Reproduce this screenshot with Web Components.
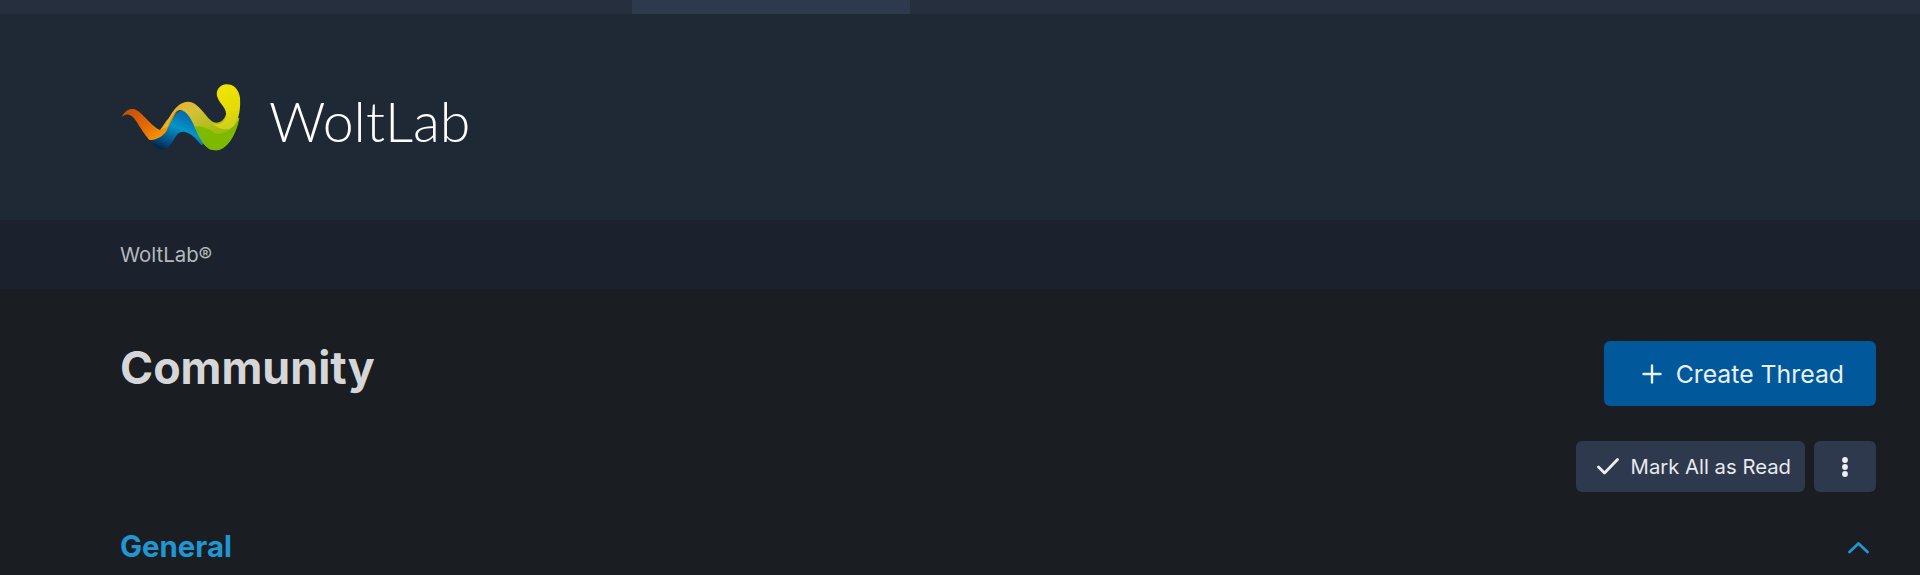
<!DOCTYPE html>
<html lang="en"><head><meta charset="utf-8"><title>WoltLab</title>
<style>
html,body{margin:0;padding:0;background:#1a1d21;}
body{font-family:Inter,"Liberation Sans",sans-serif;height:575px;overflow:hidden;}
</style></head><body>
<wl-topbar></wl-topbar>
<wl-header></wl-header>
<wl-subnav>WoltLab®</wl-subnav>
<wl-content></wl-content>
<script>
function def(name, html){
  customElements.define(name, class extends HTMLElement{
    constructor(){super();this.attachShadow({mode:'open'}).innerHTML=html;}
  });
}
def('wl-topbar',`<style>
:host{display:flex;height:14px;background:#262f3d;}
.a{width:632px}.b{width:278px;background:#2d3a4e}
</style><div class="a"></div><div class="b"></div>`);
def('wl-logo',`<style>
:host{display:flex;align-items:center;gap:19px}
svg{display:block;width:140px;height:85px;margin-left:-10px}
span{font:300 55.5px/60px Lato,sans-serif;color:#fff;padding-top:7px}
</style>
<svg viewBox="0 0 420 255" aria-hidden="true">
<defs>
<linearGradient id="o" x1="0" y1="0" x2="1" y2=".6"><stop offset="0" stop-color="#c24a08"/><stop offset=".55" stop-color="#e46a05"/><stop offset="1" stop-color="#fca500"/></linearGradient>
<linearGradient id="b" x1="0" y1="1" x2=".6" y2=".15"><stop offset="0" stop-color="#050c16"/><stop offset=".28" stop-color="#04457a"/><stop offset=".7" stop-color="#0495c9"/><stop offset="1" stop-color="#0470b0"/></linearGradient>
<linearGradient id="y" x1="0" y1="0" x2="1" y2="1"><stop offset="0" stop-color="#eda52a"/><stop offset=".3" stop-color="#d8bf3a"/><stop offset=".62" stop-color="#a8bd12"/><stop offset="1" stop-color="#72b800"/></linearGradient>
<linearGradient id="t" x1="0" y1="0" x2=".3" y2="1"><stop offset="0" stop-color="#f3e600"/><stop offset=".7" stop-color="#e6dc05"/><stop offset="1" stop-color="#cfd01a"/></linearGradient>
</defs>
<path fill="url(#b)" d="M116 193C130 208 140 224 156 224C176 224 186 202 196 186C206 171 216 168 228 172C244 176 258 192 274 210L300 200C275 165 250 115 226 106C205 100 190 125 172 155C160 175 135 195 116 193Z"/>
<path fill="url(#o)" d="M35 127C44 108 56 101 70 102C92 104 118 150 150 165L170 136L205 106C190 122 180 148 168 170C155 186 136 196 118 195C105 180 92 160 80 140C65 118 50 112 35 127Z"/>
<path fill="url(#y)" d="M150 165C175 150 185 85 232 80C262 78 282 118 305 138C320 150 345 140 350 110L388 130C380 175 352 226 318 226C290 226 280 205 268 185C250 150 238 108 210 105C195 108 185 125 172 155Z"/>
<path fill="#7cb900" d="M306 168C325 186 356 178 386 132C378 180 350 226 318 226C290 226 280 205 268 185C262 172 258 164 254 155C272 150 290 158 306 168Z" opacity=".92"/>
<path fill="url(#t)" d="M322 66C316 50 326 30 348 28C368 27 386 40 390 68C392 100 388 132 372 152C356 170 328 165 304 143C322 152 340 148 348 125C352 98 330 90 322 66Z"/>
</svg><span>WoltLab</span>`);
def('wl-header',`<style>
:host{display:flex;align-items:center;box-sizing:border-box;height:206px;padding:0 0 0 120px;background:#1f2936}
</style><wl-logo></wl-logo>`);
def('wl-subnav',`<style>
:host{display:flex;align-items:center;box-sizing:border-box;height:69px;padding:0 0 0 120px;background:#1b222e;color:#b5b8bc;font-size:20.4px}
</style><slot></slot>`);
def('wl-button',`<style>
:host{display:inline-flex;align-items:center;justify-content:center;box-sizing:border-box;border-radius:6px;background:var(--bg,#2e394d);color:var(--fg,#e8eaee);font-size:var(--fs,20.3px);height:var(--h,51px);padding:var(--pad,0 14px 0 21px);gap:var(--gap,12px);white-space:nowrap}
::slotted(svg){display:block;flex:none}
</style><slot name="icon"></slot><slot></slot>`);
def('wl-content',`<style>
:host{display:block;box-sizing:border-box;padding:52px 44px 0 120px}
.top{display:flex;justify-content:space-between;align-items:flex-start}
h1{margin:0;font-size:44.8px;line-height:54px;font-weight:700;color:#d4d6d8}
.primary{--bg:#01589a;--fg:#eaf0f8;--fs:24.8px;--h:65px;--pad:0 32px 0 38px;--gap:14px}
.actions{display:flex;justify-content:flex-end;gap:9px;margin-top:35px}
.sec{display:flex;justify-content:space-between;align-items:center;margin-top:37px}
h2{margin:0;font-size:29.4px;line-height:36px;font-weight:700;color:#2096d3}
.sq{--pad:0;width:62px}
</style>
<div class="top"><h1>Community</h1>
<wl-button class="primary"><svg slot="icon" width="20" height="20" viewBox="0 0 20 20" fill="none" stroke="#eaf0f8" stroke-width="2.4" stroke-linecap="round"><path d="M10 1.500v17M1.500 10h17"/></svg>Create Thread</wl-button></div>
<div class="actions"><wl-button><svg slot="icon" width="22" height="17" viewBox="0 0 22 17" fill="none" stroke="#eceef0" stroke-width="2.8" stroke-linecap="round" stroke-linejoin="round"><path d="M1.500 9l6 6L20.500 1.500"/></svg>Mark All as Read</wl-button>
<wl-button class="sq"><svg slot="icon" width="6" height="20" viewBox="0 0 6 20" fill="#eceef0"><circle cx="3" cy="3" r="2.900"/><circle cx="3" cy="10" r="2.900"/><circle cx="3" cy="17" r="2.900"/></svg></wl-button></div>
<div class="sec"><h2>General</h2><svg style="margin-right:7px" width="21" height="13" viewBox="0 0 21 13" fill="none" stroke="#2096d3" stroke-width="2.800" stroke-linecap="round" stroke-linejoin="round"><path d="M1.500 11L10.500 2.500L19.500 11"/></svg></div>`);
</script>
</body></html>
